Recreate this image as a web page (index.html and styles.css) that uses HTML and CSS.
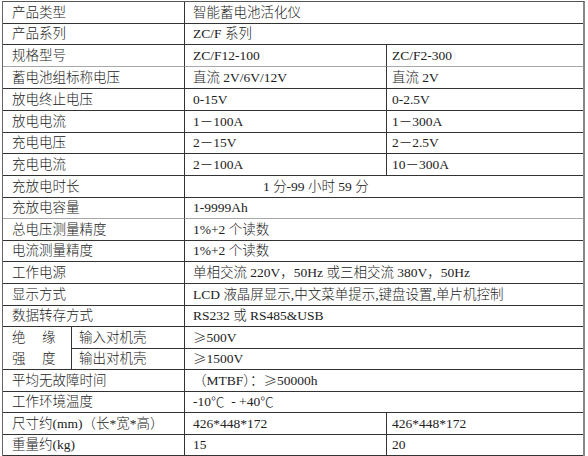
FILE: index.html
```html
<!DOCTYPE html>
<html lang="zh-CN">
<head>
<meta charset="utf-8">
<title>智能蓄电池活化仪 参数表</title>
<link rel="stylesheet" href="styles.css">
</head>
<body>
<div class="spec">
  <div class="c lab">产品类型</div><div class="c wide end">智能蓄电池活化仪</div>
  <div class="c lab">产品系列</div><div class="c wide end">ZC/F 系列</div>
  <div class="c lab lt">规格型号</div><div class="c v3 lt">ZC/F12-100</div><div class="c v4 end lt">ZC/F2-300</div>
  <div class="c lab">蓄电池组标称电压</div><div class="c v3">直流 2V/6V/12V</div><div class="c v4 end">直流 2V</div>
  <div class="c lab">放电终止电压</div><div class="c v3">0-15V</div><div class="c v4 end">0-2.5V</div>
  <div class="c lab">放电电流</div><div class="c v3">1－100A</div><div class="c v4 end">1－300A</div>
  <div class="c lab">充电电压</div><div class="c v3">2－15V</div><div class="c v4 end">2－2.5V</div>
  <div class="c lab">充电电流</div><div class="c v3">2－100A</div><div class="c v4 end">10－300A</div>
  <div class="c lab">充放电时长</div><div class="c wide end mid">1 分-99 小时 59 分</div>
  <div class="c lab lt">充放电容量</div><div class="c wide end lt">1-9999Ah</div>
  <div class="c lab">总电压测量精度</div><div class="c wide end">1%+2 个读数</div>
  <div class="c lab">电流测量精度</div><div class="c wide end">1%+2 个读数</div>
  <div class="c lab">工作电源</div><div class="c wide end">单相交流 220V，50Hz 或三相交流 380V，50Hz</div>
  <div class="c lab">显示方式</div><div class="c wide end">LCD 液晶屏显示,中文菜单提示,键盘设置,单片机控制</div>
  <div class="c lab">数据转存方式</div><div class="c wide end">RS232 或 RS485&amp;USB</div>
  <div class="c ins"><span class="sp">绝缘</span><span class="sp">强度</span></div><div class="c sub">输入对机壳</div><div class="c wide end"><span class="cj">≥</span>500V</div>
  <div class="c sub">输出对机壳</div><div class="c wide end"><span class="cj">≥</span>1500V</div>
  <div class="c lab">平均无故障时间</div><div class="c wide end">（MTBF）：<span class="cj">≥</span>50000h</div>
  <div class="c lab">工作环境温度</div><div class="c wide end">-10<span class="cj">℃</span>&nbsp; - +40<span class="cj">℃</span></div>
  <div class="c lab">尺寸约(mm)（长*宽*高）</div><div class="c v3">426*448*172</div><div class="c v4 end">426*448*172</div>
  <div class="c lab">重量约(kg)</div><div class="c v3">15</div><div class="c v4 end">20</div>
</div>
</body>
</html>
```

FILE: styles.css
```css
html, body {
  margin: 0;
  background: #ffffff;
}
body {
  padding: 1px 0 0 2px;
  font-family: "Liberation Serif", "Noto Sans CJK SC", serif;
  font-size: 13.5px;
  font-weight: 300;
  color: #222222;
}
.spec {
  display: grid;
  width: 580px;
  grid-template-columns: 69px 113px 202px 196px;
  grid-template-rows: 22px 21px 22px 22px 22px 22px 21px 22px 22px 21px 22px 21px 22px 22px 21px 22px 21px 22px 21px 22px 21px;
  border-top: 1px solid #555;
  border-left: 1px solid #666;
  border-right: 2px solid #888;
}
.c {
  box-sizing: border-box;
  border-right: 1px solid #333;
  border-bottom: 1px solid #333;
  display: flex;
  align-items: center;
  white-space: nowrap;
  padding-left: 8px;
  line-height: 1;
}
.end { border-right: none; }
.lt { border-bottom-color: #a8a8a8; }
.lab { grid-column: span 2; padding-left: 9px; }
.wide { grid-column: span 2; }
.v4 { padding-left: 5px; }
.mid { padding-left: 78px; }
.sub { padding-left: 7px; }
.cj { font-family: "Noto Sans CJK SC", sans-serif; font-weight: 300; }
.ins {
  grid-row: span 2;
  flex-direction: column;
  align-items: flex-start;
  justify-content: center;
  padding-left: 9px;
}
.sp {
  display: block;
  letter-spacing: 16.5px;
  line-height: 21px;
}
```
